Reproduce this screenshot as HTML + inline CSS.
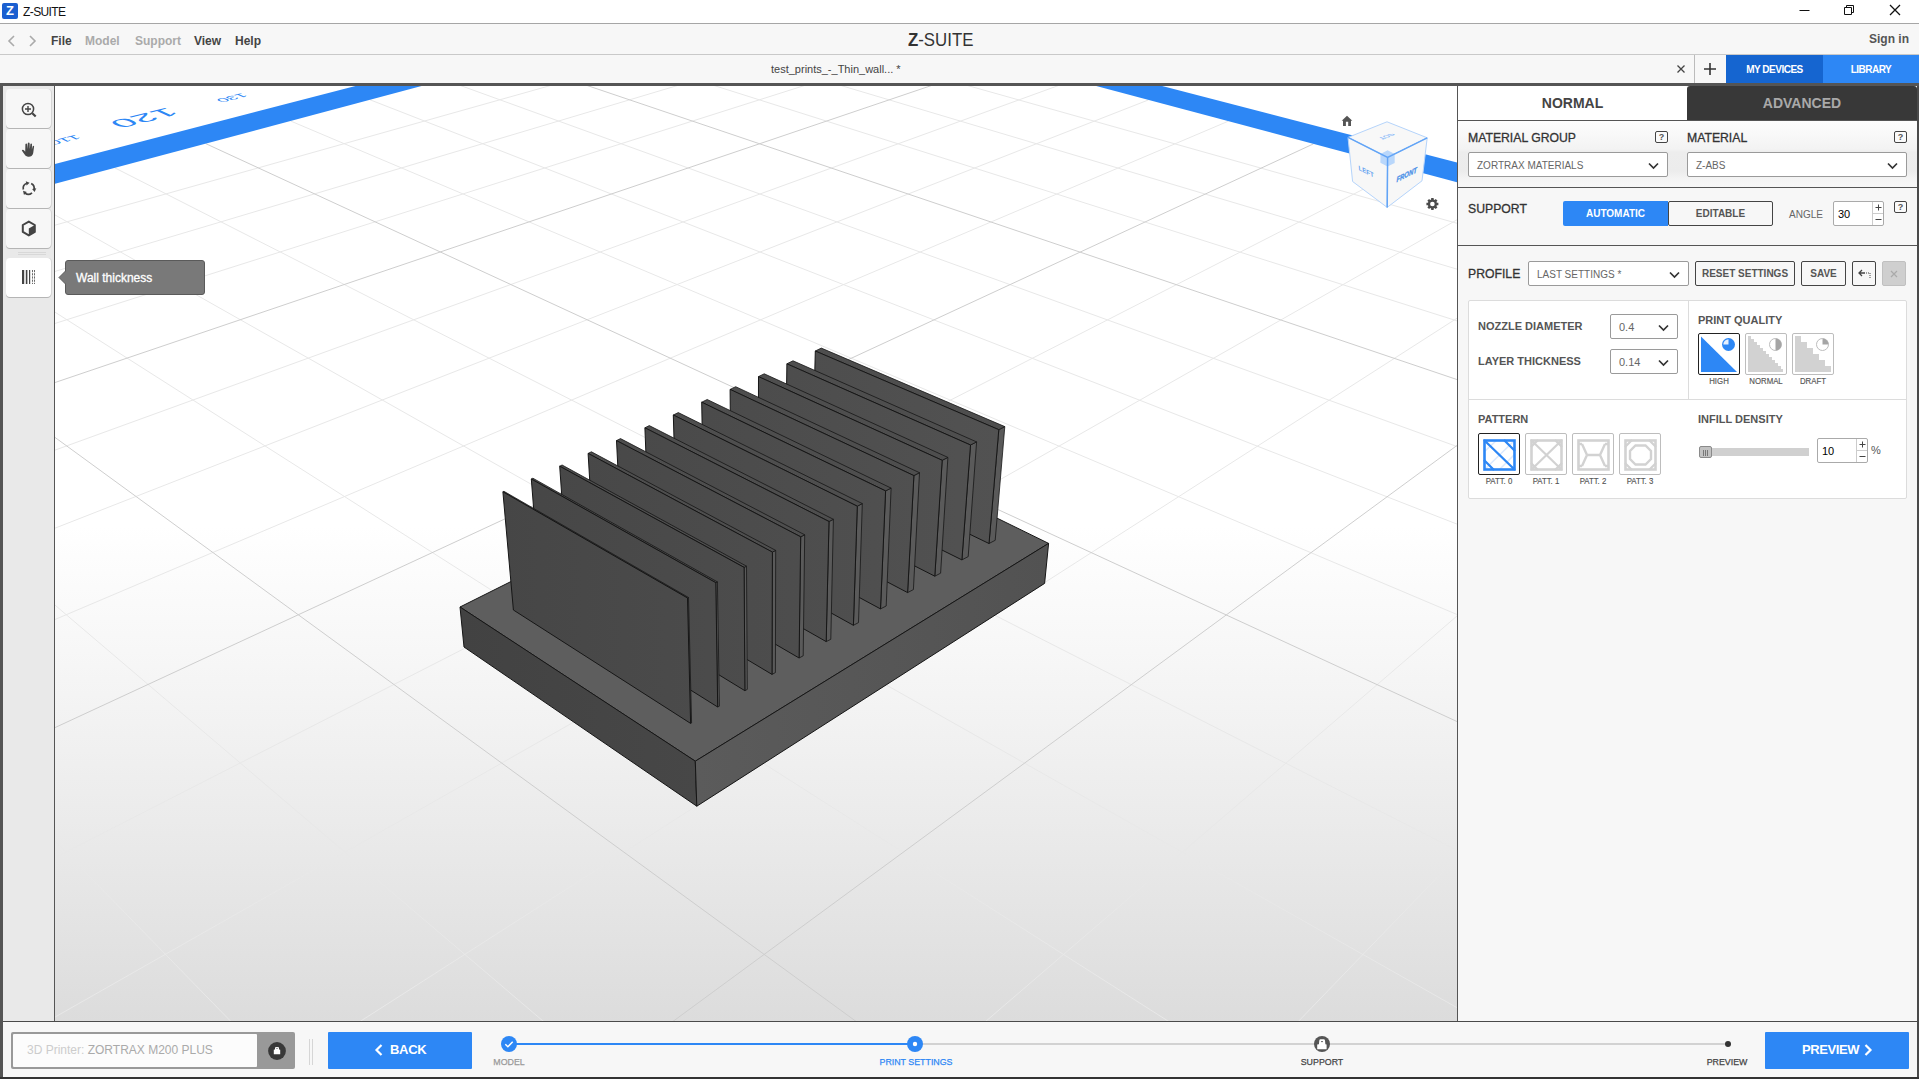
<!DOCTYPE html>
<html><head><meta charset="utf-8"><title>Z-SUITE</title>
<style>
*{box-sizing:border-box;margin:0;padding:0}
html,body{width:1919px;height:1079px;overflow:hidden;background:#f7f7f7;font-family:"Liberation Sans",sans-serif;color:#444}
.a{position:absolute}
#title{left:0;top:0;width:1919px;height:23px;background:#fff}
#title .ico{left:2px;top:3px;width:16px;height:16px;background:#1b5fd0;border-radius:2px;color:#fff;font-weight:bold;font-size:13px;line-height:16px;text-align:center}
#title .t{left:23px;top:5px;font-size:12px;line-height:15px;color:#111;letter-spacing:-0.6px}
#menub{left:0;top:23px;width:1919px;height:32px;background:#f7f7f7;border-top:1px solid #a6a6a6;border-bottom:1px solid #c9c9c9}
.mi{top:33px;font-size:12px;line-height:16px;font-weight:bold;color:#444}
.mi.d{color:#aaa}
#tabb{left:0;top:55px;width:1919px;height:28px;background:#f7f7f7}
#dark1{left:0;top:83px;width:1919px;height:3px;background:#555}
#lb{left:0;top:83px;width:3px;height:996px;background:#555}
#tool{left:3px;top:86px;width:51px;height:935px;background:#e9e9e9}
#toolr{left:54px;top:86px;width:1px;height:935px;background:#555}
.tb{left:6px;width:45px;height:39px;background:#f7f7f7;border-radius:4px;box-shadow:0 1px 0 #b5b5b5, 1px 0 0 #d5d5d5}
.tb.on{background:#fff}
.tb svg{position:absolute;left:0;top:0}
#view{left:55px;top:86px;width:1402px;height:935px;overflow:hidden;background:#fff}
#rpl{left:1457px;top:86px;width:1px;height:935px;background:#555}
#rpr{left:1917px;top:86px;width:2px;height:993px;background:#4a4a4a}
#rp{left:1458px;top:86px;width:459px;height:935px;background:#f7f7f7}
#botline{left:3px;top:1021px;width:1914px;height:1px;background:#4a4a4a}
#bot{left:3px;top:1022px;width:1914px;height:55px;background:#f7f7f7}
#botb{left:0;top:1077px;width:1919px;height:2px;background:#333}
.lbl13{font-size:13px;line-height:15px;color:#333;white-space:nowrap;transform:scaleX(0.94);transform-origin:0 0;-webkit-text-stroke:0.3px #333}
.lbl11{font-size:11px;line-height:13px;font-weight:bold;color:#555;white-space:nowrap}
.dd{height:25px;background:#fff;border:1px solid #9a9a9a;border-radius:2px;font-size:10px;line-height:25px;color:#666;padding-left:8px;white-space:nowrap}
.dd svg{position:absolute;right:8px;top:9px}
.q{width:13px;height:12px;border:1px solid #444;border-radius:2px;font-size:9px;line-height:10px;font-weight:bold;text-align:center;color:#555;background:#fafafa}
.btn{height:25px;border:1px solid #444;border-radius:2px;font-size:10px;line-height:24px;font-weight:bold;color:#555;text-align:center;background:#f7f7f7;white-space:nowrap}
.hl{height:1px;background:#555;left:1458px;width:459px}
.tile{width:42px;height:42px;border:1px solid #bdbdbd;border-radius:2px;background:#fff}
.tile.sel{border-color:#222}
.tile svg{position:absolute;left:0;top:0}
.tl{font-size:8.5px;line-height:9px;color:#555;text-align:center;width:60px;white-space:nowrap;-webkit-text-stroke:0.15px #555;transform:scaleX(0.92)}
.num{height:25px;background:#fff;border:1px solid #aaa;border-radius:2px;font-size:11px;line-height:25px;color:#000;padding-left:4px}
.num i{position:absolute;right:0;top:0;width:11px;height:23px;border-left:1px solid #ccc;font-style:normal}
.num i:before{content:"";position:absolute;left:0;top:11px;width:10px;height:1px;background:#ccc}
.ls{font-family:"Liberation Sans",sans-serif}
.pl{font-size:9.5px;line-height:10px;white-space:nowrap;text-align:center;width:100px;transform:scaleX(0.93);-webkit-text-stroke:0.25px currentColor}
</style></head><body>
<!-- title bar -->
<div id="title" class="a">
 <div class="ico a">Z</div><div class="t a">Z-SUITE</div>
 <svg class="a" style="left:1790px;top:0" width="129" height="23" viewBox="0 0 129 23"><g stroke="#111" stroke-width="1" fill="none"><path d="M9.5 10.5h10"/><path d="M54.5 7.500h7v7h-7z M56.500 7.500v-2h7v7h-2"/><path d="M100 5l10 10M110 5l-10 10" stroke-width="1.300"/></g></svg>
</div>
<!-- menu bar -->
<div id="menub" class="a"></div>
<svg class="a" style="left:6px;top:33px" width="36" height="16" viewBox="0 0 36 16"><g stroke="#aaa" stroke-width="1.6" fill="none"><path d="M8 3L3 8l5 5"/><path d="M24 3l5 5-5 5"/></g></svg>
<div class="mi a" style="left:51px">File</div>
<div class="mi d a" style="left:85px">Model</div>
<div class="mi d a" style="left:135px">Support</div>
<div class="mi a" style="left:194px">View</div>
<div class="mi a" style="left:235px">Help</div>
<div class="a" style="left:908px;top:29px;font-size:19px;line-height:22px;color:#333;white-space:nowrap;transform:scaleX(0.885);transform-origin:0 0"><b style="font-weight:bold">Z</b>-SUITE</div>
<div class="mi a" style="right:10px;top:31px;color:#555">Sign in</div>
<!-- tab bar -->
<div id="tabb" class="a"></div>
<div class="a" style="left:771px;top:62px;font-size:11px;line-height:14px;color:#444;white-space:nowrap">test_prints_-_Thin_wall... *</div>
<svg class="a" style="left:1676px;top:64px" width="10" height="10" viewBox="0 0 10 10"><path d="M1.5 1.5l7 7M8.5 1.5l-7 7" stroke="#444" stroke-width="1.3"/></svg>
<div class="a" style="left:1694px;top:55px;width:1px;height:28px;background:#bbb"></div>
<svg class="a" style="left:1703px;top:62px" width="14" height="14" viewBox="0 0 14 14"><path d="M7 1v12M1 7h12" stroke="#333" stroke-width="1.6"/></svg>
<div class="a" style="left:1726px;top:55px;width:97px;height:28px;background:#1565d0;color:#fff;font-size:10px;font-weight:bold;line-height:30px;letter-spacing:-0.5px;text-align:center">MY DEVICES</div>
<div class="a" style="left:1823px;top:55px;width:96px;height:28px;background:#2d87f5;color:#fff;font-size:10px;font-weight:bold;line-height:30px;letter-spacing:-0.5px;text-align:center">LIBRARY</div>
<div id="dark1" class="a"></div>
<div id="lb" class="a"></div>
<!-- left toolbar -->
<div id="tool" class="a"></div><div id="toolr" class="a"></div>
<div class="tb a" style="top:89px"><svg width="45" height="39" viewBox="0 -1 45 39"><g stroke="#444" fill="none"><circle cx="22" cy="19" r="5.6" stroke-width="1.5"/><path d="M22 16v6M19 19h6" stroke-width="1.4"/><path d="M26.3 23.3l3.4 3.2" stroke-width="2.2"/></g></svg></div>
<div class="tb a" style="top:129px"><svg width="45" height="39" viewBox="0 0 45 39"><path d="M19.2 26.2c-1.2-1.6-2.6-3.6-3.4-5 .7-.9 1.7-.6 2.4.3l1 1.3.2-7.5c.3-1 1.5-1 1.7 0l.4 4.6.3-5.6c.3-1 1.6-1 1.8 0l.2 5.6.6-4.8c.3-1 1.5-.9 1.6.1l-.1 5.3.8-3.200c.4-.9 1.500-.7 1.4.3l-.8 6c-.2 1.5-.8 2.600-1.800 3.400-1.600 1.100-4.900.900-6.300-.800z" fill="#484848"/></svg></div>
<div class="tb a" style="top:169px"><svg width="45" height="39" viewBox="0 0 45 39"><g stroke="#444" stroke-width="1.7" fill="none"><path d="M17.300 20.500a5.500 5.500 0 0 1 3.500-6.200"/><path d="M25.200 14.600a5.500 5.500 0 0 1 2.700 6.400"/><path d="M26 23.800a5.500 5.500 0 0 1-7 .3"/></g><g fill="#444"><path d="M19.800 12.200l3.800 1.600-3 2.600z"/><path d="M30.300 19.200l-1.700 3.800-2.500-3.100z"/><path d="M17 21.700l3.800 1.300-2.800 3z"/></g></svg></div>
<div class="tb a" style="top:209px"><svg width="45" height="39" viewBox="0 0 45 39"><path d="M22.800 12.600l6 3.400v6.900l-6 3.500-6-3.500v-6.900z" fill="#f7f7f7" stroke="#444" stroke-width="2" stroke-linejoin="round"/><path d="M22.800 19.500l6-3.500v6.900l-6 3.500z" fill="#444"/></svg></div>
<div class="a" style="left:18px;top:252px;width:28px;height:1px;background:#d8d8d8"></div>
<div class="a" style="left:18px;top:254px;width:28px;height:1px;background:#d8d8d8"></div>
<div class="tb on a" style="top:258px"><svg width="45" height="39" viewBox="0 0 45 39"><g fill="#444"><rect x="16" y="12" width="2.200" height="14"/><rect x="19.800" y="12" width="1.600" height="14"/><rect x="23" y="12" width="1.200" height="14"/></g><path d="M26.500 12v14M28.500 12v14" stroke="#444" stroke-width="0.800" stroke-dasharray="2.200 1"/></svg></div>
<!-- viewport -->
<div id="view" class="a">
<svg id="vp" width="1402" height="935" viewBox="0 0 1402 935">
<defs>
<linearGradient id="bg" x1="0" y1="0" x2="0" y2="1">
<stop offset="0" stop-color="#ffffff"/><stop offset="0.47" stop-color="#ffffff"/><stop offset="0.62" stop-color="#f6f6f6"/><stop offset="0.8" stop-color="#eaeaea"/><stop offset="1" stop-color="#dcdcdc"/>
</linearGradient>
<linearGradient id="fin" gradientUnits="userSpaceOnUse" x1="445" y1="0" x2="945" y2="0"><stop offset="0" stop-color="#464646"/><stop offset="1" stop-color="#525252"/></linearGradient>
<linearGradient id="baseL" x1="0" y1="0" x2="1" y2="0"><stop offset="0" stop-color="#424242"/><stop offset="1" stop-color="#474747"/></linearGradient>
<linearGradient id="baseR" x1="0" y1="0" x2="1" y2="0"><stop offset="0" stop-color="#5b5b5b"/><stop offset="1" stop-color="#525252"/></linearGradient>
</defs>
<rect width="1402" height="935" fill="url(#bg)"/>
<path d="M759.9 -75L-782.4 359.7M647.8 -75L2194.7 360.4M819.1 -59.2L-753.1 410.3M588.7 -59.3L2166.1 410.9M881.8 -42.5L-720.8 466.3M526.2 -42.6L2134.3 466.9M1018.7 -6L-644.5 598.3M389.7 -6.2L2059.6 598.8M1093.5 13.9L-599.1 676.8M315.1 13.8L2015 677.4M1173.3 35.2L-547.5 766M235.6 35L1964.5 766.5M1349.4 82.2L-420.2 986.3M59.9 81.9L1839.7 986.8M1447 108.2L-340.3 1124.6M-37.4 107.8L1761.4 1124.9M1551.9 136.1L-245.5 1288.5M-141.9 135.8L1668.5 1288.8M1787 198.8L8.8 1728.4M-376.4 198.3L1419.2 1728.7M1919.4 234.1L185 2033.4M-508.4 233.6L1246.4 2033.5M2063.5 272.5L715.7 2033.5M-652.1 271.9L715.7 2033.5" stroke="#e8e8e8" stroke-width="1" fill="none"/>
<path d="M948.2 -24.8L-684.8 528.6M460 -24.9L2099 529.2M1258.4 57.9L-488.5 868.2M150.7 57.6L1906.6 868.6M1664.9 166.3L-131.4 1485.9M-254.6 165.8L1556.6 1486.2M2220.7 314.5L1246.4 2033.5M-808.9 313.8L185 2033.4" stroke="#cecece" stroke-width="1" fill="none"/>
<polygon points="703.7,-90 -808.9,313.8 -821.8,291.5 703.6,-104.7" fill="#2d87f5"/>
<polygon points="703.7,-90 2220.7,314.5 2233.4,292.2 703.6,-104.7" fill="#2d87f5"/>
<polygon points="405,521 640.3,675.2 993.6,457.4 760.6,343.2" fill="#5e5e5e" stroke="#161616" stroke-width="1" stroke-linejoin="round"/>
<polygon points="405,521 409,561 641.8,720.2 640.3,675.2" fill="url(#baseL)" stroke="#161616" stroke-width="1" stroke-linejoin="round"/>
<polygon points="640.3,675.2 641.8,720.2 989.6,497.4 993.6,457.4" fill="url(#baseR)" stroke="#161616" stroke-width="1" stroke-linejoin="round"/>
<polygon points="943.8,343.7 949.8,340.6 940.2,454.3 934,457.5" fill="#5a5a5a" stroke="#161616" stroke-width="0.8" stroke-linejoin="round"/>
<polygon points="760.3,265 766.3,262.1 949.8,340.6 943.8,343.7" fill="#4e4e4e" stroke="#161616" stroke-width="0.8" stroke-linejoin="round"/>
<polygon points="760.3,265 943.8,343.7 934,457.5 757.6,372.6" fill="url(#fin)" stroke="#161616" stroke-width="1" stroke-linejoin="round"/>
<polygon points="915.5,359 921.6,355.9 913.2,470.6 906.9,473.9" fill="#5a5a5a" stroke="#161616" stroke-width="0.8" stroke-linejoin="round"/>
<polygon points="731.9,277.8 738,274.8 921.6,355.9 915.5,359" fill="#4e4e4e" stroke="#161616" stroke-width="0.8" stroke-linejoin="round"/>
<polygon points="731.9,277.8 915.5,359 906.9,473.9 730.4,386.4" fill="url(#fin)" stroke="#161616" stroke-width="1" stroke-linejoin="round"/>
<polygon points="887.2,374.3 892.9,371.4 885.6,487.2 879.8,490.2" fill="#5a5a5a" stroke="#161616" stroke-width="0.8" stroke-linejoin="round"/>
<polygon points="703.5,290.6 709.2,287.8 892.9,371.4 887.2,374.3" fill="#4e4e4e" stroke="#161616" stroke-width="0.8" stroke-linejoin="round"/>
<polygon points="703.5,290.6 887.2,374.3 879.8,490.2 703.2,400.2" fill="url(#fin)" stroke="#161616" stroke-width="1" stroke-linejoin="round"/>
<polygon points="858.9,389.6 864.5,386.7 858.4,503.6 852.6,506.6" fill="#5a5a5a" stroke="#161616" stroke-width="0.8" stroke-linejoin="round"/>
<polygon points="675.1,303.4 680.7,300.7 864.5,386.7 858.9,389.6" fill="#4e4e4e" stroke="#161616" stroke-width="0.8" stroke-linejoin="round"/>
<polygon points="675.1,303.4 858.9,389.6 852.6,506.6 676,413.9" fill="url(#fin)" stroke="#161616" stroke-width="1" stroke-linejoin="round"/>
<polygon points="830.6,404.9 836.1,402.1 831.2,520 825.5,522.9" fill="#5a5a5a" stroke="#161616" stroke-width="0.8" stroke-linejoin="round"/>
<polygon points="646.7,316.2 652.2,313.5 836.1,402.1 830.6,404.9" fill="#4e4e4e" stroke="#161616" stroke-width="0.8" stroke-linejoin="round"/>
<polygon points="646.7,316.2 830.6,404.9 825.5,522.9 648.8,427.7" fill="url(#fin)" stroke="#161616" stroke-width="1" stroke-linejoin="round"/>
<polygon points="802.3,420.2 807.3,417.6 803.5,536.6 798.4,539.3" fill="#5a5a5a" stroke="#161616" stroke-width="0.8" stroke-linejoin="round"/>
<polygon points="618.3,329 623.3,326.6 807.3,417.6 802.3,420.2" fill="#4e4e4e" stroke="#161616" stroke-width="0.8" stroke-linejoin="round"/>
<polygon points="618.3,329 802.3,420.2 798.4,539.3 621.6,441.4" fill="url(#fin)" stroke="#161616" stroke-width="1" stroke-linejoin="round"/>
<polygon points="774,435.5 778.4,433.3 775.8,553.3 771.2,555.6" fill="#5a5a5a" stroke="#161616" stroke-width="0.8" stroke-linejoin="round"/>
<polygon points="589.9,341.8 594.3,339.6 778.4,433.3 774,435.5" fill="#4e4e4e" stroke="#161616" stroke-width="0.8" stroke-linejoin="round"/>
<polygon points="589.9,341.8 774,435.5 771.2,555.6 594.4,455.2" fill="url(#fin)" stroke="#161616" stroke-width="1" stroke-linejoin="round"/>
<polygon points="745.7,450.8 749.7,448.8 748.2,569.8 744.1,572" fill="#5a5a5a" stroke="#161616" stroke-width="0.8" stroke-linejoin="round"/>
<polygon points="561.5,354.6 565.5,352.6 749.7,448.8 745.7,450.8" fill="#4e4e4e" stroke="#161616" stroke-width="0.8" stroke-linejoin="round"/>
<polygon points="561.5,354.6 745.7,450.8 744.1,572 567.2,469" fill="url(#fin)" stroke="#161616" stroke-width="1" stroke-linejoin="round"/>
<polygon points="717.4,466.1 720.7,464.4 720.4,586.6 717,588.4" fill="#5a5a5a" stroke="#161616" stroke-width="0.8" stroke-linejoin="round"/>
<polygon points="533.1,367.4 536.4,365.8 720.7,464.4 717.4,466.1" fill="#4e4e4e" stroke="#161616" stroke-width="0.8" stroke-linejoin="round"/>
<polygon points="533.1,367.4 717.4,466.1 717,588.4 540,482.7" fill="url(#fin)" stroke="#161616" stroke-width="1" stroke-linejoin="round"/>
<polygon points="689.1,481.4 691.5,480.2 692.3,603.4 689.9,604.7" fill="#5a5a5a" stroke="#161616" stroke-width="0.8" stroke-linejoin="round"/>
<polygon points="504.7,380.2 507.1,379 691.5,480.2 689.1,481.4" fill="#4e4e4e" stroke="#161616" stroke-width="0.8" stroke-linejoin="round"/>
<polygon points="504.7,380.2 689.1,481.4 689.9,604.7 512.8,496.5" fill="url(#fin)" stroke="#161616" stroke-width="1" stroke-linejoin="round"/>
<polygon points="660.8,496.7 662.4,495.9 664.4,620.2 662.7,621" fill="#5a5a5a" stroke="#161616" stroke-width="0.8" stroke-linejoin="round"/>
<polygon points="476.3,393 477.9,392.2 662.4,495.9 660.8,496.7" fill="#4e4e4e" stroke="#161616" stroke-width="0.8" stroke-linejoin="round"/>
<polygon points="476.3,393 660.8,496.7 662.7,621 485.6,510.2" fill="url(#fin)" stroke="#161616" stroke-width="1" stroke-linejoin="round"/>
<polygon points="632.5,512 633.5,511.5 636.6,636.9 635.6,637.4" fill="#5a5a5a" stroke="#161616" stroke-width="0.8" stroke-linejoin="round"/>
<polygon points="447.9,405.8 448.9,405.3 633.5,511.5 632.5,512" fill="#4e4e4e" stroke="#161616" stroke-width="0.8" stroke-linejoin="round"/>
<polygon points="447.9,405.8 632.5,512 635.6,637.4 458.4,524" fill="url(#fin)" stroke="#161616" stroke-width="1" stroke-linejoin="round"/>
<g stroke="#b5d4fb" stroke-width="1" stroke-linejoin="round">
<polygon points="1332,35.8 1372.2,51.8 1332.6,71.5 1293,51.4" fill="#f8f8f8"/>
<polygon points="1293,51.4 1332.6,71.5 1332.2,121.4 1297.6,95.5" fill="#f7f7f7"/>
<polygon points="1332.6,71.5 1372.2,51.8 1367,94.8 1332.2,121.4" fill="#f7f7f7"/>
</g>
<polygon points="1332.6,64.34 1339.73,67.95 1339.66,76.94 1332.53,80.48 1325.4,76.86 1325.47,67.88" fill="#b9d7fb"/>
<path d="M1293,51.4L1332.6,71.5L1372.2,51.8M1332.6,71.5L1332.2,121.4" stroke="#62a4f6" stroke-width="1.5" fill="none"/>
<text transform="matrix(0.99 0.5 0.11 1.1 1311.34 87.85)" class="ls" font-weight="bold" font-size="6.2" fill="#5f9ff0" text-anchor="middle">LEFT</text>
<text transform="matrix(0.99 -0.49 -0.01 1.25 1351.67 91.21)" class="ls" font-weight="bold" font-style="italic" font-size="6" fill="#4a8fe8" stroke="#4a8fe8" stroke-width="0.25" text-anchor="middle">FRONT</text>
<text transform="matrix(0.98 -0.39 -1.01 -0.4 1329.4 49.4)" class="ls" font-weight="bold" font-size="6.5" fill="#8fbdf8" text-anchor="middle">TOP</text>
<path transform="translate(1292 35)" d="M0 -5.2L-5.3 -0.3L-4 -0.3L-4 5L-1.1 5L-1.1 0.8L1.2 0.8L1.2 5L4 5L4 -0.3L5.3 -0.3Z" fill="#555"/>
<path transform="translate(1377.4 118)" d="M4.41 -1.32L5.98 -1.21L5.98 1.21L4.41 1.32L4.05 2.19L5.08 3.37L3.37 5.08L2.19 4.05L1.32 4.41L1.21 5.98L-1.21 5.98L-1.32 4.41L-2.19 4.05L-3.37 5.08L-5.08 3.37L-4.05 2.19L-4.41 1.32L-5.98 1.21L-5.98 -1.21L-4.41 -1.32L-4.05 -2.19L-5.08 -3.37L-3.37 -5.08L-2.19 -4.05L-1.32 -4.41L-1.21 -5.98L1.21 -5.98L1.32 -4.41L2.19 -4.05L3.37 -5.08L5.08 -3.37L4.05 -2.19Z M2.3 0A2.3 2.3 0 1 0 -2.3 0A2.3 2.3 0 1 0 2.3 0Z" fill="#4a4a4a" fill-rule="evenodd"/>
<text transform="matrix(-3.62 0.9 -1.95 -0.9 82.62 28.65)" class="ls" font-size="10" fill="#2d87f5" text-anchor="middle">120</text>
<text transform="matrix(-1.62 0.41 -0.96 -0.41 173.7 10.45)" class="ls" font-size="10" fill="#2d87f5" text-anchor="middle">130</text>
<text transform="matrix(-1.84 0.46 -0.91 -0.46 6.27 52.49)" class="ls" font-size="10" fill="#2d87f5" text-anchor="middle">110</text>
</svg>
</div>
<!-- tooltip -->
<div class="a" style="left:65px;top:260px;width:140px;height:35px;background:#797979;border:1px solid #5a5a5a;border-radius:3px;color:#fff;font-size:12px;line-height:34.500px;padding-left:10px;-webkit-text-stroke:0.300px #fff">Wall thickness</div>
<svg class="a" style="left:58px;top:270px" width="8" height="15" viewBox="0 0 8 15"><path d="M8 0.500L1 7.500L8 14.500" fill="#797979" stroke="#5a5a5a"/></svg>
<!-- right panel -->
<div id="rpl" class="a"></div><div id="rpr" class="a"></div>
<div id="rp" class="a"></div>
<div class="a" style="left:1458px;top:86px;width:229px;height:34px;background:#fff;border-radius:2px 2px 0 0;font-size:14px;font-weight:bold;line-height:34px;text-align:center;color:#444">NORMAL</div>
<div class="a" style="left:1687px;top:86px;width:230px;height:34px;background:#383838;border-radius:3px 3px 0 0;font-size:14px;font-weight:bold;line-height:34px;text-align:center;color:#a9a9a9">ADVANCED</div>
<div class="hl a" style="top:120px"></div>
<div class="a" style="left:1458px;top:121px;width:459px;height:66px;border-radius:2px;background:linear-gradient(#fdfdfd 0,#f3f3f3 28px,#ededed 31px,#ececec 50px,#f4f4f4 58px,#f7f7f7 66px)"></div>
<div class="lbl13 a" style="left:1468px;top:130px">MATERIAL GROUP</div>
<div class="q a" style="left:1655px;top:131px">?</div>
<div class="lbl13 a" style="left:1687px;top:130px">MATERIAL</div>
<div class="q a" style="left:1894px;top:131px">?</div>
<div class="dd a" style="left:1468px;top:152px;width:200px">ZORTRAX MATERIALS<svg width="11" height="8" viewBox="0 0 11 8"><path d="M1 1.500l4.500 4.500L10 1.500" stroke="#333" stroke-width="1.700" fill="none"/></svg></div>
<div class="dd a" style="left:1687px;top:152px;width:220px">Z-ABS<svg width="11" height="8" viewBox="0 0 11 8"><path d="M1 1.500l4.500 4.500L10 1.500" stroke="#333" stroke-width="1.700" fill="none"/></svg></div>
<div class="hl a" style="top:187px"></div>
<div class="lbl13 a" style="left:1468px;top:201px">SUPPORT</div>
<div class="a" style="left:1563px;top:201px;width:105px;height:25px;background:#2d87f5;border-radius:2px 0 0 2px;color:#fff;font-size:10px;font-weight:bold;line-height:25px;text-align:center">AUTOMATIC</div>
<div class="btn a" style="left:1668px;top:201px;width:105px">EDITABLE</div>
<div class="a" style="left:1789px;top:207.500px;font-size:10px;line-height:13px;color:#666">ANGLE</div>
<div class="num a" style="left:1833px;top:201px;width:51px">30<i></i></div>
<svg class="a" style="left:1874px;top:202px" width="9" height="23" viewBox="0 0 9 23"><path d="M1.500 5.500h6M4.500 2.500v6M1.500 17.500h6" stroke="#444" stroke-width="1"/></svg>
<div class="q a" style="left:1894px;top:201px">?</div>
<div class="hl a" style="top:245px"></div>
<div class="lbl13 a" style="left:1468px;top:266px">PROFILE</div>
<div class="dd a" style="left:1528px;top:261px;width:161px">LAST SETTINGS *<svg width="11" height="8" viewBox="0 0 11 8"><path d="M1 1.500l4.500 4.500L10 1.500" stroke="#333" stroke-width="1.700" fill="none"/></svg></div>
<div class="btn a" style="left:1695px;top:261px;width:100px">RESET SETTINGS</div>
<div class="btn a" style="left:1801px;top:261px;width:45px">SAVE</div>
<div class="btn a" style="left:1852px;top:261px;width:24px"><svg style="position:absolute;left:5px;top:7px" width="13" height="10" viewBox="0 0 13 10"><path d="M1 4h6M4 1L1 4l3 3" stroke="#444" stroke-width="1.300" fill="none"/><path d="M8 4h4v5" stroke="#444" stroke-width="1" stroke-dasharray="1 1" fill="none"/></svg></div>
<div class="btn a" style="left:1882px;top:261px;width:24px;background:#cfcfcf;border-color:#c0c0c0"><svg style="position:absolute;left:7px;top:8px" width="8" height="8" viewBox="0 0 8 8"><path d="M1 1l6 6M7 1L1 7" stroke="#aaa" stroke-width="1.200"/></svg></div>
<!-- settings box -->
<div class="a" style="left:1468px;top:300px;width:439px;height:199px;background:#fff;border:1px solid #dcdcdc;border-radius:2px"></div>
<div class="a" style="left:1469px;top:399px;width:437px;height:1px;background:#dcdcdc"></div>
<div class="a" style="left:1688px;top:301px;width:1px;height:98px;background:#dcdcdc"></div>
<div class="lbl11 a" style="left:1478px;top:320px">NOZZLE DIAMETER</div>
<div class="dd a" style="left:1610px;top:314px;width:68px;font-size:11px">0.4<svg width="11" height="8" viewBox="0 0 11 8"><path d="M1 1.500l4.500 4.500L10 1.500" stroke="#333" stroke-width="1.700" fill="none"/></svg></div>
<div class="lbl11 a" style="left:1478px;top:355px">LAYER THICKNESS</div>
<div class="dd a" style="left:1610px;top:349px;width:68px;font-size:11px">0.14<svg width="11" height="8" viewBox="0 0 11 8"><path d="M1 1.500l4.500 4.500L10 1.500" stroke="#333" stroke-width="1.700" fill="none"/></svg></div>
<div class="lbl11 a" style="left:1698px;top:314px">PRINT QUALITY</div>
<div class="tile sel a" style="left:1698px;top:333px"><svg width="40" height="40" viewBox="0 0 40 40"><path d="M2 2.500L38 38H2z" fill="#2d87f5"/><circle cx="29.500" cy="10.500" r="6.500" fill="#2d87f5"/><path d="M29.500 10.500v-5.200a5.200 5.200 0 0 0-5.200 5.200z" fill="#e6f0fe"/></svg></div>
<div class="tile a" style="left:1745px;top:333px"><svg width="40" height="40" viewBox="0 0 40 40"><path d="M2 2h3v3h3v3h3v3h3v3h3v3h3v3h3v3h3v3h3v3h3v3h3v3h2v3H2z" fill="#d2d2d2"/><circle cx="29.500" cy="10.500" r="6" fill="#fff" stroke="#bdbdbd" stroke-width="1"/><path d="M29.500 4.500a6 6 0 0 1 0 12z" fill="#a5a5a5"/></svg></div>
<div class="tile a" style="left:1792px;top:333px"><svg width="40" height="40" viewBox="0 0 40 40"><path d="M2 2h6v6h6v6h6v6h6v6h6v6h6v6H2z" fill="#d2d2d2"/><circle cx="29.500" cy="10.500" r="6" fill="#fff" stroke="#bdbdbd" stroke-width="1"/><path d="M29.500 10.500v-6a6 6 0 0 1 6 6z" fill="#a5a5a5"/></svg></div>
<div class="tl a" style="left:1689px;top:377px">HIGH</div>
<div class="tl a" style="left:1736px;top:377px">NORMAL</div>
<div class="tl a" style="left:1783px;top:377px">DRAFT</div>
<div class="lbl11 a" style="left:1478px;top:413px">PATTERN</div>
<div class="tile sel a" style="left:1478px;top:433px"><svg width="40" height="40" viewBox="0 0 40 40"><g fill="none"><path d="M5 36L36 6M5 18L18 6M20 36L36 20" stroke="#dbe9fd" stroke-width="1.500"/><rect x="5.500" y="6.500" width="30" height="29" stroke="#2d87f5" stroke-width="2.600"/><path d="M5 6l31 30M5 26l10 10M25 6l11 11" stroke="#2d87f5" stroke-width="2.300"/></g></svg></div>
<div class="tile a" style="left:1525px;top:433px"><svg width="40" height="40" viewBox="0 0 40 40"><g fill="none" stroke="#d2d2d2" stroke-width="2.600"><rect x="5.500" y="6.500" width="30" height="29"/><path d="M5 6l31 30M36 6L5 36M5 13l7-7M29 6l7 7M5 29l7 7M29 36l7-7" stroke-width="2.200"/></g></svg></div>
<div class="tile a" style="left:1572px;top:433px"><svg width="40" height="40" viewBox="0 0 40 40"><g fill="none" stroke="#d2d2d2" stroke-width="2.600"><rect x="5.500" y="6.500" width="30" height="29"/><path d="M14 21h13M14 21L9 10M27 21l5-11M14 21L9 32M27 21l5 11M5 10h4M32 10h4M5 32h4M32 32h4" stroke-width="2.400"/></g></svg></div>
<div class="tile a" style="left:1619px;top:433px"><svg width="40" height="40" viewBox="0 0 40 40"><g fill="none" stroke="#d2d2d2" stroke-width="2.600"><rect x="5.500" y="6.500" width="30" height="29"/><path d="M15.500 11.500h10l5.500 5.500v8l-5.500 5.500h-10L10 25v-8z" stroke-width="2.400"/><path d="M5 13l7-7M29 6l7 7M5 29l7 7M29 36l7-7" stroke-width="2.200"/></g></svg></div>
<div class="tl a" style="left:1469px;top:477px">PATT. 0</div>
<div class="tl a" style="left:1516px;top:477px">PATT. 1</div>
<div class="tl a" style="left:1563px;top:477px">PATT. 2</div>
<div class="tl a" style="left:1610px;top:477px">PATT. 3</div>
<div class="lbl11 a" style="left:1698px;top:413px">INFILL DENSITY</div>
<div class="a" style="left:1699px;top:448px;width:110px;height:8px;background:#d0d0d0"></div>
<div class="a" style="left:1699px;top:446px;width:13px;height:12px;background:#c2c2c2;border:1px solid #8a8a8a;border-radius:2px"><svg style="position:absolute;left:0;top:0" width="11" height="10" viewBox="0 0 11 10"><path d="M3.500 3v6M5.500 3v6M7.500 3v6" stroke="#777" stroke-width="1"/></svg></div>
<div class="num a" style="left:1817px;top:438px;width:51px">10<i></i></div>
<svg class="a" style="left:1858px;top:439px" width="9" height="23" viewBox="0 0 9 23"><path d="M1.500 5.500h6M4.500 2.500v6M1.500 17.500h6" stroke="#444" stroke-width="1"/></svg>
<div class="a" style="left:1871px;top:444px;font-size:11px;line-height:13px;color:#555">%</div>
<!-- bottom bar -->
<div id="botline" class="a"></div><div id="bot" class="a"></div><div id="botb" class="a"></div>
<div class="a" style="left:11px;top:1032px;width:284px;height:37px;background:#999;border-radius:2px"></div>
<div class="a" style="left:13px;top:1034px;width:244px;height:33px;background:#fcfcfc;border-radius:1px;font-size:12px;line-height:33px;padding-left:14px;color:#aaa;white-space:nowrap"><span style="color:#ccc">3D Printer:</span> ZORTRAX M200 PLUS</div>
<svg class="a" style="left:267px;top:1041px" width="20" height="20" viewBox="0 0 20 20"><circle cx="10" cy="10" r="8.900" fill="#383838"/><path d="M6.800 13.300V8.700L7.900 8.400L8.100 6.800Q8.200 6 9 6h2Q11.800 6 11.900 6.800L12.100 8.400L13.200 8.700V13.300Z" fill="#fff"/><ellipse cx="10" cy="7.300" rx="0.900" ry="0.450" fill="#383838"/></svg>
<div class="a" style="left:309px;top:1039px;width:1px;height:26px;background:#d6d6d6"></div>
<div class="a" style="left:312px;top:1039px;width:1px;height:26px;background:#d6d6d6"></div>
<div class="a" style="left:328px;top:1032px;width:144px;height:37px;background:#2d87f5;border-radius:1px"></div>
<svg class="a" style="left:374px;top:1043px" width="10" height="14" viewBox="0 0 10 14"><path d="M7.500 2L2.500 7l5 5" stroke="#fff" stroke-width="2.200" fill="none"/></svg>
<div class="a" style="left:390px;top:1042px;font-size:13px;line-height:16px;font-weight:bold;letter-spacing:-0.3px;color:#fff">BACK</div>
<div class="a" style="left:1765px;top:1032px;width:144px;height:37px;background:#2d87f5;border-radius:1px"></div>
<div class="a" style="left:1802px;top:1042px;font-size:13px;line-height:16px;font-weight:bold;letter-spacing:-0.4px;color:#fff">PREVIEW</div>
<svg class="a" style="left:1863px;top:1043px" width="10" height="14" viewBox="0 0 10 14"><path d="M2.500 2l5 5-5 5" stroke="#fff" stroke-width="2.200" fill="none"/></svg>
<!-- progress -->
<div class="a" style="left:509px;top:1043px;width:406px;height:2px;background:#2d87f5"></div>
<div class="a" style="left:915px;top:1043px;width:812px;height:2px;background:#d2d2d2"></div>
<svg class="a" style="left:500px;top:1035px" width="18" height="18" viewBox="0 0 18 18"><circle cx="9" cy="9" r="8" fill="#2d87f5"/><path d="M5.300 9.200l2.600 2.500 4.800-5" stroke="#fff" stroke-width="1.500" fill="none"/></svg>
<svg class="a" style="left:906px;top:1035px" width="18" height="18" viewBox="0 0 18 18"><circle cx="9" cy="9" r="8" fill="#2d87f5"/><circle cx="9" cy="9" r="2.200" fill="#fff"/></svg>
<svg class="a" style="left:1313px;top:1035px" width="18" height="18" viewBox="-9 -9 18 18"><circle cx="0" cy="0" r="8" fill="#555"/><path d="M-4.800 5.300V0.600L-3.100 0.300L-2.700 -3.600Q-2.500 -4.700 -1.500 -4.700H1.700Q2.800 -4.700 3 -3.600L3.400 0.300L4.600 0.600V5.300Z" fill="#fff"/><ellipse cx="0" cy="-2.400" rx="1.100" ry="0.600" fill="#555"/></svg>
<svg class="a" style="left:1724px;top:1040px" width="8" height="8" viewBox="0 0 8 8"><circle cx="4" cy="4" r="3" fill="#333"/></svg>
<div class="pl a" style="left:459px;top:1057px;color:#999">MODEL</div>
<div class="pl a" style="left:866px;top:1057px;color:#2d87f5">PRINT SETTINGS</div>
<div class="pl a" style="left:1272px;top:1057px;color:#444">SUPPORT</div>
<div class="pl a" style="left:1677px;top:1057px;color:#444">PREVIEW</div>
</body></html>
